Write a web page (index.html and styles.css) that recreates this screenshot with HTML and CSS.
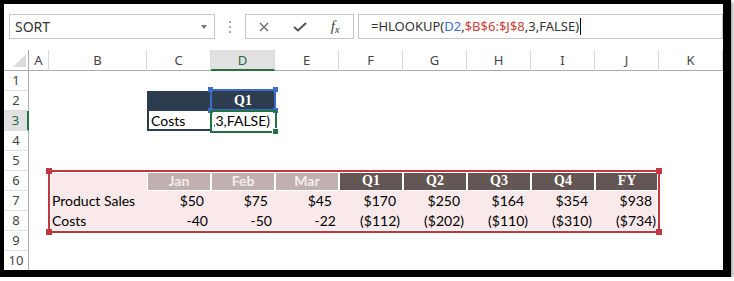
FILE: index.html
```html
<!DOCTYPE html>
<html lang="en">
<head>
    <meta charset="UTF-8">
    <title>HLOOKUP</title>
    <link rel="stylesheet" href="styles.css">
</head>
<body>

<div class="window">
    <div class="fbar">
        <div class="namebox"><span>SORT</span><span class="arrow"></span></div>
        <div class="dots"><i></i><i></i><i></i></div>
        <div class="btns">
            <span class="btn">
                <svg width="10" height="10" viewBox="0 0 10 10"><path d="M1 1L9 9M9 1L1 9" stroke="#666" stroke-width="1.3" fill="none"/></svg>
            </span>
            <span class="btn">
                <svg width="14" height="10" viewBox="0 0 14 10"><path d="M1 5L5 8.5L13 1" stroke="#555" stroke-width="2" fill="none"/></svg>
            </span>
            <span class="btn fx"><i>f</i><i class="sub">x</i></span>
        </div>
        <div class="formula">=HLOOKUP(<span class="ref1">D2</span>,<span class="ref2">$B$6:$J$8</span>,3,FALSE)<span class="caret"></span></div>
    </div>

    <div class="sheet">
        <div class="row hdr">
            <div class="rh corner"><svg width="25" height="21" viewBox="0 0 25 21"><polygon points="9,17 22,17 22,4" fill="#dcdcdc"/></svg></div>
            <div class="ch ca">A</div>
            <div class="ch cb">B</div>
            <div class="ch cm">C</div>
            <div class="ch cm sel">D</div>
            <div class="ch cm">E</div>
            <div class="ch cm">F</div>
            <div class="ch cm">G</div>
            <div class="ch cm">H</div>
            <div class="ch cm">I</div>
            <div class="ch cm">J</div>
            <div class="ch cm">K</div>
        </div>
        <div class="row"><div class="rh">1</div></div>
        <div class="row">
            <div class="rh">2</div>
            <div class="c ca"></div>
            <div class="c cb"></div>
            <div class="c cm dark"></div>
            <div class="c cm dark qt center">Q1
                <div class="refbox"><b class="k tl"></b><b class="k tr"></b><b class="k bl"></b><b class="k br"></b></div>
            </div>
        </div>
        <div class="row">
            <div class="rh sel">3</div>
            <div class="c ca"></div>
            <div class="c cb"></div>
            <div class="c cm framed">Costs</div>
            <div class="c cm editing">
                <span class="clip"><span>8,3,FALSE)</span></span>
                <div class="selbox"><b class="handle"></b></div>
            </div>
        </div>
        <div class="row"><div class="rh">4</div></div>
        <div class="row"><div class="rh">5</div></div>
        <div class="row">
            <div class="rh">6</div>
            <div class="c ca"></div>
            <div class="c cb pink anchor">
                <div class="range"><b class="k tl"></b><b class="k tr"></b><b class="k bl"></b><b class="k br"></b></div>
            </div>
            <div class="c cm mhead">Jan</div>
            <div class="c cm mhead">Feb</div>
            <div class="c cm mhead">Mar</div>
            <div class="c cm qhead">Q1</div>
            <div class="c cm qhead">Q2</div>
            <div class="c cm qhead">Q3</div>
            <div class="c cm qhead">Q4</div>
            <div class="c cm qhead">FY</div>
        </div>
        <div class="row">
            <div class="rh">7</div>
            <div class="c ca"></div>
            <div class="c cb pink">Product Sales</div>
            <div class="c cm pink num"><span class="pos">$50</span></div>
            <div class="c cm pink num"><span class="pos">$75</span></div>
            <div class="c cm pink num"><span class="pos">$45</span></div>
            <div class="c cm pink num"><span class="pos">$170</span></div>
            <div class="c cm pink num"><span class="pos">$250</span></div>
            <div class="c cm pink num"><span class="pos">$164</span></div>
            <div class="c cm pink num"><span class="pos">$354</span></div>
            <div class="c cm pink num"><span class="pos">$938</span></div>
        </div>
        <div class="row">
            <div class="rh">8</div>
            <div class="c ca"></div>
            <div class="c cb pink">Costs</div>
            <div class="c cm pink num">-40</div>
            <div class="c cm pink num">-50</div>
            <div class="c cm pink num">-22</div>
            <div class="c cm pink num">($112)</div>
            <div class="c cm pink num">($202)</div>
            <div class="c cm pink num">($110)</div>
            <div class="c cm pink num">($310)</div>
            <div class="c cm pink num">($734)</div>
        </div>
        <div class="row"><div class="rh">9</div></div>
        <div class="row"><div class="rh">10</div></div>
    </div>
</div>

</body>
</html>
```

FILE: styles.css
```css
body {
    margin: 0;
    background: #fff;
}
.window {
    width: 719px;
    height: 266px;
    border: solid #000;
    border-width: 4px 8px 7px 4px;
    background: #fff;
    overflow: hidden;
    box-shadow: 2px 2px 3px rgba(0, 0, 0, 0.35);
    font-family: "Noto Sans", sans-serif;
}

/* formula bar */
.fbar {
    height: 46px;
    box-sizing: border-box;
    padding: 10px 0 0 5px;
    display: flex;
    align-items: flex-start;
}
.namebox {
    width: 206px;
    height: 25px;
    box-sizing: border-box;
    border: 1px solid #c6c6c6;
    display: flex;
    align-items: center;
    justify-content: space-between;
    padding: 0 7px 0 5px;
    font-size: 14px;
    color: #333;
}
.arrow {
    width: 0;
    height: 0;
    border-top: 4px solid #777;
    border-left: 3px solid transparent;
    border-right: 3px solid transparent;
}
.dots {
    width: 30px;
    height: 25px;
    display: flex;
    flex-direction: column;
    align-items: center;
    justify-content: center;
    gap: 3px;
}
.dots i {
    width: 2px;
    height: 2px;
    background: #aaa;
}
.btns {
    width: 109px;
    height: 25px;
    box-sizing: border-box;
    border: 1px solid #c6c6c6;
    display: flex;
}
.btn {
    width: 36px;
    display: flex;
    align-items: center;
    justify-content: center;
}
.fx {
    font-family: "Liberation Serif", serif;
    font-size: 15px;
    color: #444;
}
.fx .sub {
    font-size: 11px;
    margin-top: 4px;
}
.formula {
    margin-left: 4px;
    flex: 1;
    height: 25px;
    box-sizing: border-box;
    border: 1px solid #c6c6c6;
    padding-left: 12px;
    font-size: 13px;
    line-height: 23px;
    color: #333;
    white-space: nowrap;
    display: flex;
    align-items: center;
}
.ref1 { color: #3a6cc6; }
.ref2 { color: #c8433a; }
.caret {
    width: 1px;
    height: 17px;
    background: #000;
    margin-left: 1px;
}

/* grid */
.row {
    display: flex;
    height: 20px;
}
.row.hdr {
    height: 21px;
}
.rh {
    width: 25px;
    flex: none;
    box-sizing: border-box;
    border-right: 1px solid #ababab;
    border-bottom: 1px solid #e0e0e0;
    text-align: center;
    font-size: 13px;
    line-height: 19px;
    color: #444;
}
.rh.corner {
    border-bottom: 1px solid #ababab;
}
.rh.sel {
    background: #e1e1e1;
    border-right: 2px solid #217346;
    color: #1e6b41;
}
.ch {
    flex: none;
    box-sizing: border-box;
    border-right: 1px solid #dadada;
    border-bottom: 1px solid #ababab;
    text-align: center;
    font-size: 13px;
    line-height: 21px;
    color: #444;
}
.ch.sel {
    background: #e1e1e1;
    border-bottom: 2px solid #217346;
    color: #1e6b41;
}
.ca { width: 20px; }
.cb { width: 98px; }
.cm { width: 64px; }

.c {
    flex: none;
    box-sizing: border-box;
    padding: 0 3px;
    font-family: Lato, sans-serif;
    font-size: 14px;
    line-height: 20px;
    color: #000;
    white-space: nowrap;
}
.center { text-align: center; }

/* small lookup table */
.dark {
    background: #2d3c4f;
    position: relative;
}
.qt {
    color: #fff;
    font-family: "Liberation Serif", serif;
    font-weight: bold;
}
.framed {
    border-left: 2px solid #2d3c4f;
    border-bottom: 2px solid #2d3c4f;
    padding-left: 2px;
}
.refbox {
    position: absolute;
    left: -1px;
    top: -2px;
    width: 66px;
    height: 22px;
    box-sizing: border-box;
    border: 2px solid #3a6cc6;
}
.refbox .k {
    position: absolute;
    width: 5px;
    height: 5px;
    background: #3a6cc6;
}
.k.tl { left: -4px; top: -4px; }
.k.tr { right: -4px; top: -4px; }
.k.bl { left: -4px; bottom: -4px; }
.k.br { right: -4px; bottom: -4px; }
.editing {
    position: relative;
    padding-right: 5px;
    display: flex;
    justify-content: flex-end;
}
.clip {
    display: flex;
    justify-content: flex-end;
    width: 58px;
    overflow: hidden;
}
.clip span {
    flex: none;
}
.selbox {
    position: absolute;
    left: -1px;
    top: -1px;
    width: 67px;
    height: 23px;
    box-sizing: border-box;
    border: 2px solid #217346;
}
.handle {
    position: absolute;
    right: -4px;
    bottom: -4px;
    width: 5px;
    height: 5px;
    background: #217346;
    border: 1px solid #fff;
}

/* sales table */
.pink {
    background: #f9e9ea;
}
.num {
    text-align: right;
    padding-right: 3px;
}
.pos {
    padding-right: 4px;
}
.mhead,
.qhead {
    border: 1px solid #fff;
    text-align: center;
    font-weight: bold;
    line-height: 18px;
}
.mhead {
    background: #c0b1b0;
    color: #f4eded;
}
.qhead {
    background: #645654;
    color: #fff;
    font-family: "Liberation Serif", serif;
}
.anchor {
    position: relative;
}
.range {
    position: absolute;
    left: -1px;
    top: -1px;
    width: 612px;
    height: 63px;
    box-sizing: border-box;
    border: 2px solid #c0383f;
    box-shadow: inset 0 0 0 1px #fff;
    z-index: 2;
}
.range .k {
    position: absolute;
    width: 6px;
    height: 6px;
    background: #c0383f;
}
```
